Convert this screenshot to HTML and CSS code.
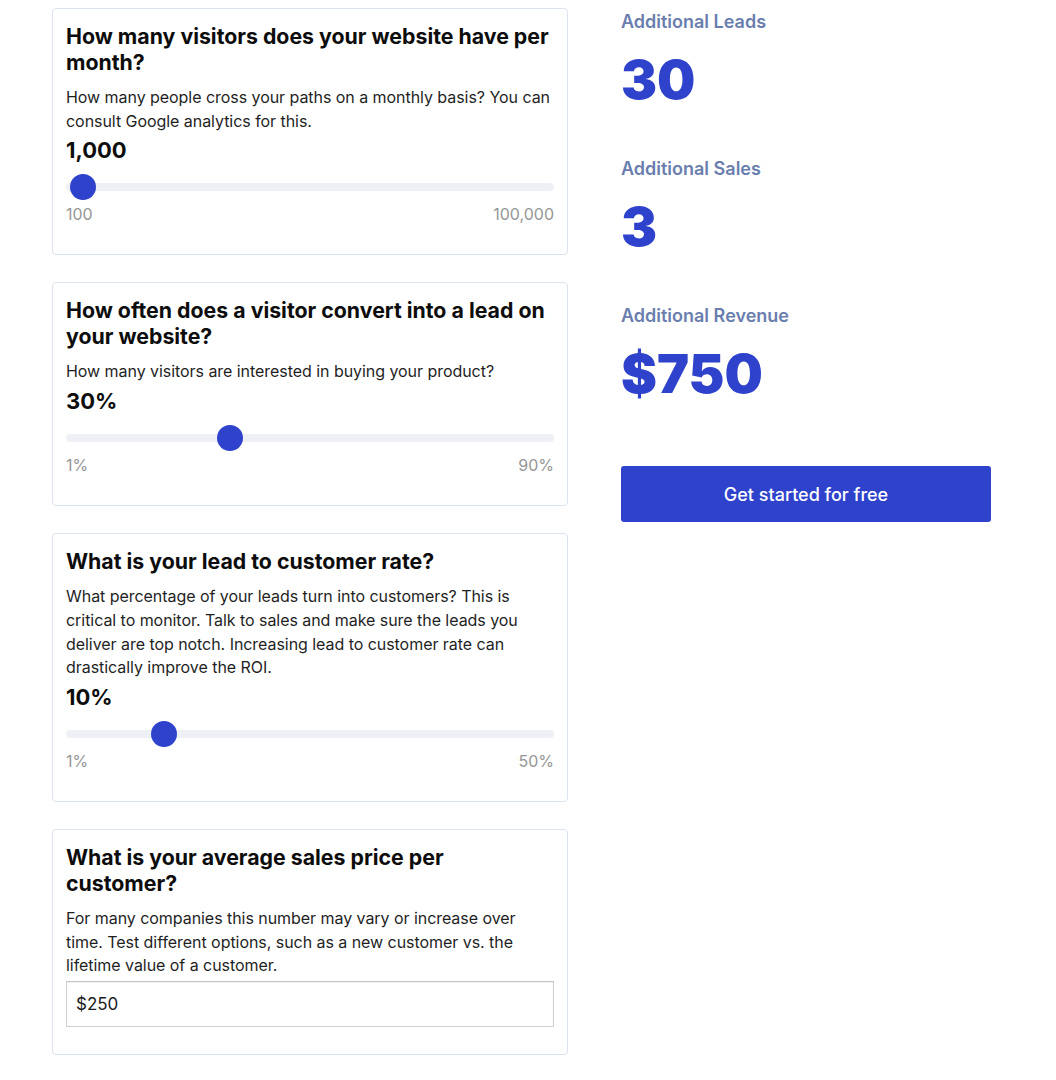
FILE: index.html
```html
<!DOCTYPE html>
<html lang="en">
<head>
<meta charset="utf-8">
<title>ROI Calculator</title>
<link rel="stylesheet" href="styles.css">
</head>
<body>
<div class="page">
  <div class="inputs">
    <section class="card">
      <h2 class="card-title">How many visitors does your website have per month?</h2>
      <p class="card-desc">How many people cross your paths on a monthly basis? You can consult Google analytics for this.</p>
      <div class="card-value">1,000</div>
      <input class="range" type="range" min="100" max="100000" value="1000">
      <div class="range-labels"><span>100</span><span>100,000</span></div>
    </section>
    <section class="card">
      <h2 class="card-title">How often does a visitor convert into a lead on your website?</h2>
      <p class="card-desc">How many visitors are interested in buying your product?</p>
      <div class="card-value">30%</div>
      <input class="range" type="range" min="1" max="90" value="30">
      <div class="range-labels"><span>1%</span><span>90%</span></div>
    </section>
    <section class="card">
      <h2 class="card-title">What is your lead to customer rate?</h2>
      <p class="card-desc">What percentage of your leads turn into customers? This is critical to monitor. Talk to sales and make sure the leads you deliver are top notch. Increasing lead to customer rate can drastically improve the ROI.</p>
      <div class="card-value">10%</div>
      <input class="range" type="range" min="1" max="50" value="10">
      <div class="range-labels"><span>1%</span><span>50%</span></div>
    </section>
    <section class="card">
      <h2 class="card-title">What is your average sales price per customer?</h2>
      <p class="card-desc">For many companies this number may vary or increase over time. Test different options, such as a new customer vs. the lifetime value of a customer.</p>
      <input class="price-input" type="text" value="$250">
    </section>
  </div>
  <aside class="results">
    <div class="stat">
      <div class="stat-label">Additional Leads</div>
      <div class="stat-value">30</div>
    </div>
    <div class="stat">
      <div class="stat-label">Additional Sales</div>
      <div class="stat-value">3</div>
    </div>
    <div class="stat">
      <div class="stat-label">Additional Revenue</div>
      <div class="stat-value">$750</div>
    </div>
    <button class="cta" type="button">Get started for free</button>
  </aside>
</div>
</body>
</html>
```
FILE: styles.css
```css
* { box-sizing: border-box; }
html, body { margin: 0; padding: 0; background: #fff; }
body {
  padding: 8px 0 0 52px;
  font-family: Inter, "Noto Sans", "Liberation Sans", sans-serif;
  color: #111;
}
.page {
  display: grid;
  grid-template-columns: 516px 370px;
  column-gap: 53px;
  align-items: start;
}
.inputs {
  display: flex;
  flex-direction: column;
  gap: 27px;
}
.card {
  border: 1px solid #dce2ee;
  border-radius: 4px;
  padding: 14px 13px 27px;
}
.card-title {
  margin: 0;
  font-size: 21.3px;
  line-height: 26px;
  font-weight: 700;
  color: #0d0d0d;
}
.card-desc {
  margin: 11px 0 0;
  font-size: 16px;
  line-height: 23.7px;
  letter-spacing: -0.05px;
  color: #1f1f1f;
}
.card-value {
  margin-top: 2px;
  font-size: 22px;
  line-height: 30px;
  font-weight: 700;
  color: #0d0d0d;
}
.range {
  -webkit-appearance: none;
  appearance: none;
  display: block;
  width: 100%;
  height: 26px;
  margin: 9px 0 0;
  background: transparent;
}
.range::-webkit-slider-runnable-track {
  height: 8px;
  border-radius: 4px;
  background: #edf1f6;
}
.range::-webkit-slider-thumb {
  -webkit-appearance: none;
  appearance: none;
  width: 26px;
  height: 26px;
  margin-top: -9px;
  border-radius: 50%;
  background: #2e42cc;
  border: none;
}
.range-labels {
  margin: 2px 0 1px;
  display: flex;
  justify-content: space-between;
  font-size: 16px;
  line-height: 24px;
  color: #969696;
}
.price-input {
  display: block;
  width: 100%;
  height: 46px;
  margin-top: 3px;
  padding: 0 9px;
  border: 1px solid #cfcfcf;
  border-top-color: #c4c4c4;
  box-shadow: inset 0 1px 1px rgba(0,0,0,0.06);
  border-radius: 0;
  font-family: inherit;
  font-size: 17px;
  color: #1a1a1a;
  background: #fff;
}
.results {
  display: flex;
  flex-direction: column;
  padding-top: 1px;
}
.stat { margin-bottom: 48px; }
.stat-label {
  font-size: 18px;
  line-height: 26px;
  font-weight: 600;
  color: #6a7eae;
}
.stat-value {
  margin-top: 17px;
  font-size: 54px;
  line-height: 56px;
  font-weight: 900;
  color: #2e42cc;
}
.stat:last-of-type { margin-bottom: 0; }
.cta {
  margin-top: 64px;
  width: 370px;
  height: 56px;
  border: none;
  border-radius: 3px;
  background: #2e42cc;
  color: #fff;
  font-family: inherit;
  font-size: 18px;
  font-weight: 500;
  cursor: pointer;
}
```
